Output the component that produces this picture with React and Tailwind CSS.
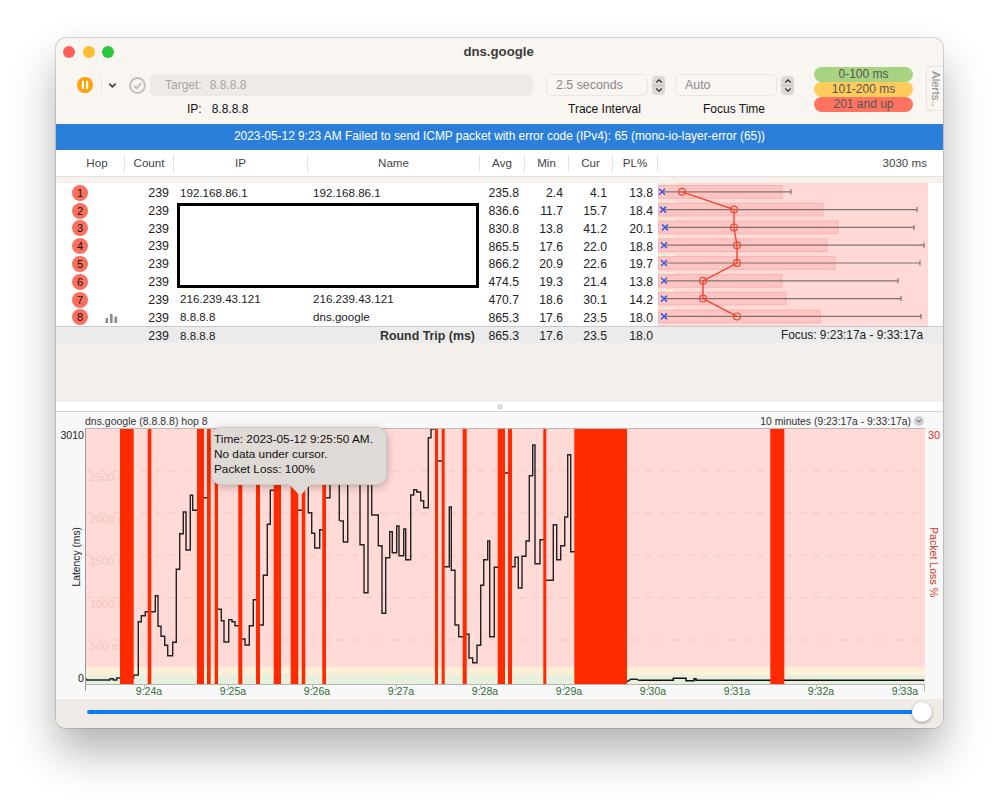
import React from 'react';
import { ChevronDown, ChevronUp } from 'lucide-react';

const hops = [
    { n: 1, ip: '192.168.86.1', name: '192.168.86.1', avg: '235.8', min: '2.4', cur: '4.1', pl: '13.8', bar: 124, end: 133, x: 4, c: 24 },
    { n: 2, ip: '', name: '', avg: '836.6', min: '11.7', cur: '15.7', pl: '18.4', bar: 165, end: 259, x: 5, c: 76 },
    { n: 3, ip: '', name: '', avg: '830.8', min: '13.8', cur: '41.2', pl: '20.1', bar: 180, end: 256, x: 7, c: 76 },
    { n: 4, ip: '', name: '', avg: '865.5', min: '17.6', cur: '22.0', pl: '18.8', bar: 169, end: 266, x: 6, c: 79 },
    { n: 5, ip: '', name: '', avg: '866.2', min: '20.9', cur: '22.6', pl: '19.7', bar: 177, end: 262, x: 6, c: 79 },
    { n: 6, ip: '', name: '', avg: '474.5', min: '19.3', cur: '21.4', pl: '13.8', bar: 124, end: 240, x: 6, c: 45 },
    { n: 7, ip: '216.239.43.121', name: '216.239.43.121', avg: '470.7', min: '18.6', cur: '30.1', pl: '14.2', bar: 128, end: 243, x: 6, c: 45 },
    { n: 8, ip: '8.8.8.8', name: 'dns.google', avg: '865.3', min: '17.6', cur: '23.5', pl: '18.0', bar: 162, end: 263, x: 6, c: 79 },
];

const columns = [
    { label: 'Hop', w: 'w-[69px] pl-[14px]' },
    { label: 'Count', w: 'w-[49px]' },
    { label: 'IP', w: 'w-[134px]' },
    { label: 'Name', w: 'w-[172px]' },
    { label: 'Avg', w: 'w-[45px]' },
    { label: 'Min', w: 'w-[44px]' },
    { label: 'Cur', w: 'w-[44px]' },
    { label: 'PL%', w: 'w-[45px]' },
];

// loss bars, page x from / to
const lossBars = [
    [120, 133.7], [147.7, 151.3], [197, 204], [207, 210.7], [214.7, 218], [238.3, 242.3], [256, 260],
    [273.7, 281], [290.7, 298.3], [301.7, 305.3], [322.3, 326], [435, 438], [441.7, 444.7], [462.7, 466.7],
    [497.7, 505], [508, 512], [543.3, 546.3], [574.3, 627], [770.3, 784.3],
];

// latency trace, read off the chart in 3x coordinates
const traceA = [
    77, 790, 80, 795, 150, 795, 150, 791, 160, 791, 160, 795, 170, 795, 170, 789, 221, 789, 221, 780, 235, 780, 235, 620,
    244, 620, 244, 602, 256, 602, 256, 590, 286, 590, 286, 542, 294, 542, 294, 634, 303, 634, 303, 664, 314, 664, 314, 691,
    323, 691, 323, 722, 338, 722, 338, 682, 349, 682, 349, 463, 359, 463, 359, 356, 370, 356, 370, 291, 378, 291, 378, 405,
    391, 405, 391, 241, 398, 241, 398, 286, 420, 286, 420, 248, 445, 248, 445, 100, 468, 100, 468, 583, 484, 583, 484, 617,
    492, 617, 492, 681, 506, 681, 506, 614, 516, 614, 516, 620, 525, 620, 525, 632, 540, 632, 540, 672, 555, 672, 555, 690,
    568, 690, 568, 632, 580, 632, 580, 554, 594, 554, 594, 630, 610, 630, 610, 481, 622, 481, 622, 328, 631, 328, 631, 226,
    650, 226, 650, 100, 700, 100, 700, 286, 730, 286, 730, 100, 745, 100, 745, 293, 755, 293, 755, 355, 764, 355, 764, 399,
    779, 399, 779, 344, 792, 344, 792, 248, 810, 248, 810, 100, 838, 100, 838, 318,
];
const traceB = [
    0, 318, 10, 318, 10, 381, 23, 381, 23, 100, 60, 100, 60, 389, 72, 389, 72, 533, 84, 533, 84, 100, 95, 100, 95, 300, 115, 300,
    115, 392, 126, 392, 126, 595, 137, 595, 137, 428, 149, 428, 149, 350, 157, 350, 157, 413, 170, 413, 170, 333, 177, 333,
    177, 422, 191, 422, 191, 342, 197, 342, 197, 434, 212, 434, 212, 240, 221, 240, 221, 224, 230, 224, 230, 231, 242, 231,
    242, 257, 251, 257, 251, 278, 265, 278, 265, 68, 273, 68, 273, 42, 290, 42, 290, 138, 310, 138, 310, 455, 328, 455,
    328, 276, 334, 276, 334, 466, 345, 466, 345, 630, 356, 630, 356, 665, 374, 665, 374, 658, 387, 658, 387, 729, 398, 729,
    398, 743, 411, 743, 411, 691, 422, 691, 422, 511, 431, 511, 431, 434, 443, 434, 443, 378, 449, 378, 449, 665, 463, 665,
    463, 457, 485, 457, 485, 174, 510, 174, 510, 455, 525, 455, 525, 427, 535, 427, 535, 519, 546, 519, 546, 424, 558, 424,
    558, 378, 568, 378, 568, 182, 578, 182, 578, 90, 585, 90, 585, 446, 600, 446, 600, 374, 614, 374, 614, 496, 640, 496,
    640, 329, 650, 329, 650, 434, 662, 434, 662, 392, 674, 392, 674, 306, 683, 306, 683, 119, 692, 119, 692, 410, 750, 410,
    750, 800, 861, 800, 872, 793, 890, 793, 900, 797,
];
const traceC = [0, 826, 100, 826, 100, 820, 138, 820, 138, 827, 162, 827, 162, 821, 168, 821, 168, 826, 853, 826];

const toPoints = (list, ox, oy) => {
    const out = [];
    for (let i = 0; i < list.length; i += 2) {
        out.push(`${(list[i] / 3 + ox - 85).toFixed(1)},${(list[i + 1] / 3 + oy - 428).toFixed(1)}`);
    }
    return out.join(' ');
};

const gridLines = [
    { y: 42.7, label: '2500 ms' },
    { y: 85, label: '2000 ms' },
    { y: 127.3, label: '1500 ms' },
    { y: 169.7, label: '1000 ms' },
    { y: 212, label: '500 ms' },
];

const timeLabels = ['9:24a', '9:25a', '9:26a', '9:27a', '9:28a', '9:29a', '9:30a', '9:31a', '9:32a', '9:33a'];

const Stepper = () => (
    <div className="w-[13px] h-[19px] ml-[1px] rounded-[4px] bg-[#dcd8d3] flex flex-col items-center justify-center text-[#333]">
        <ChevronUp size={10} strokeWidth={2.6} className="-mb-[1px]" />
        <div className="w-full h-px bg-[#c4c0bb]" />
        <ChevronDown size={10} strokeWidth={2.6} className="-mt-[1px]" />
    </div>
);

const HopPlot = () => {
    const rowH = 17.8;
    const cy = (i) => 8.8 + i * rowH;
    const line = hops.map((h, i) => `${h.c},${cy(i)}`).join(' ');
    return (
        <svg width="270" height="143" className="block shrink-0">
            <rect x="0" y="0" width="270" height="143" fill="#ffd9d5" />
            {hops.map((h, i) => (
                <g key={h.n}>
                    <rect x="0" y={cy(i) - 8.8} width="9" height="3" fill="#e4efdc" />
                    <rect x="9" y={cy(i) - 8.8} width="8" height="3" fill="#fdf0d8" />
                    <rect x="0.5" y={cy(i) - 6.3} width={h.bar - 0.5} height="12.6" fill="#ffbdbb" fillOpacity="0.75" stroke="#f2b3b3" />
                    <line x1={h.x} x2={h.end} y1={cy(i)} y2={cy(i)} stroke="#7d7272" strokeWidth="1.2" />
                    <line x1={h.end} x2={h.end} y1={cy(i) - 2.5} y2={cy(i) + 2.5} stroke="#7d7272" strokeWidth="1.2" />
                    <path
                        d={`M${h.x - 3} ${cy(i) - 3}L${h.x + 3} ${cy(i) + 3}M${h.x + 3} ${cy(i) - 3}L${h.x - 3} ${cy(i) + 3}`}
                        stroke="#3b5be6"
                        strokeWidth="1.5"
                    />
                </g>
            ))}
            <polyline points={line} fill="none" stroke="#f5452f" strokeWidth="1.4" />
            {hops.map((h, i) => (
                <circle key={h.n} cx={h.c} cy={cy(i)} r="3.4" fill="none" stroke="#f5452f" strokeWidth="1.2" />
            ))}
        </svg>
    );
};

const LossChart = () => (
    <svg width="840" height="271" className="block overflow-visible">
        <rect x="0" y="0" width="840" height="239" fill="#ffdad6" />
        <rect x="0" y="239" width="840" height="8" fill="#fdf0d8" />
        <rect x="0" y="247" width="840" height="9" fill="#e6f0dc" />
        {gridLines.map((g) => (
            <g key={g.y}>
                <line x1="0" x2="840" y1={g.y} y2={g.y} stroke="#f4c6c1" strokeDasharray="7 7" />
                <text x="5" y={g.y + 10} fontSize="11" fill="#f3c5c0">
                    {g.label}
                </text>
            </g>
        ))}
        <polyline points={toPoints(traceA, 60, 415)} fill="none" stroke="#222" strokeWidth="1.4" />
        <polyline points={toPoints(traceB, 340, 415)} fill="none" stroke="#222" strokeWidth="1.4" />
        <polyline points={toPoints(traceC, 640, 405)} fill="none" stroke="#111" strokeWidth="1.5" />
        {lossBars.map(([from, to]) => (
            <rect key={from} x={from - 85} y="0" width={to - from} height="256" fill="#ff2a00" />
        ))}
        <line x1="0" x2="840" y1="0.5" y2="0.5" stroke="#bdb6b3" />
        <line x1="0" x2="840" y1="256.5" y2="256.5" stroke="#b5b5b5" />
        <line x1="0.5" x2="0.5" y1="0" y2="263" stroke="#9a9a9a" />
        <line x1="839.5" x2="839.5" y1="256" y2="264" stroke="#b5b5b5" />
        {timeLabels.map((t, i) => (
            <g key={t}>
                <line x1={59.5 + i * 84} x2={59.5 + i * 84} y1="256" y2="261" stroke="#b5b5b5" />
                <text x={64 + i * 84} y="267" fontSize="10.5" fill="#2f6f35" textAnchor="middle">
                    {t}
                </text>
            </g>
        ))}
    </svg>
);

const App = () => {
    return (
        <div className="h-[802px] w-[999px] bg-white pt-[38px] pl-[56px] overflow-hidden font-['Liberation_Sans',Arial,sans-serif] text-[11.6px] text-[#222]">
            <div className="relative w-[887px] h-[690px] rounded-[10px] overflow-hidden flex flex-col bg-[#f9f5f0] shadow-[0_0_0_1px_rgba(0,0,0,0.14),0_24px_44px_rgba(0,0,0,0.3)]">
                {/* title bar and toolbar */}
                <div className="h-[86px] shrink-0 flex flex-col">
                    <div className="h-[27px] flex items-center relative">
                        <div className="flex gap-[7.6px] pl-[7px]">
                            <span className="w-3 h-3 rounded-full bg-[#ff5f57]" />
                            <span className="w-3 h-3 rounded-full bg-[#febc2e]" />
                            <span className="w-3 h-3 rounded-full bg-[#28c840]" />
                        </div>
                        <span className="flex-1 text-center font-bold text-[13.2px] text-[#3c3c3c] pr-[60px]">dns.google</span>
                    </div>
                    <div className="flex flex-1">
                        <div className="flex flex-col w-[477px] pl-[21px]">
                            <div className="flex items-center h-[24px] mt-[8px]">
                                <svg width="16" height="16" viewBox="0 0 16 16" className="shrink-0">
                                    <circle cx="8" cy="8" r="8" fill="#ffa00a" />
                                    <rect x="4.8" y="3.8" width="2.2" height="8.4" rx="1" fill="#fff" />
                                    <rect x="9" y="3.8" width="2.2" height="8.4" rx="1" fill="#fff" />
                                </svg>
                                <div className="w-px h-[14px] bg-[#e8e3de] ml-[8px]" />
                                <ChevronDown size={11} strokeWidth={3.5} className="ml-[5px] text-[#444]" />
                                <svg width="17" height="17" viewBox="0 0 17 17" className="ml-[11px] shrink-0">
                                    <circle cx="8.5" cy="8.5" r="7.4" fill="none" stroke="#c4c0bc" strokeWidth="2" />
                                    <path d="M5 8.6l2.6 2.6 4.6-5.2" fill="none" stroke="#c4c0bc" strokeWidth="2" />
                                </svg>
                                <div className="ml-[4px] flex-1 h-[22px] rounded-[5px] bg-[#eeeae6] flex items-center pl-[15px] text-[#a9a6a3] text-[12px]">
                                    <span>Target:</span>
                                    <span className="ml-[8px]">8.8.8.8</span>
                                </div>
                            </div>
                            <div className="mt-[3px] pl-[110px] flex text-[12px] text-[#111]">
                                <span>IP:</span>
                                <span className="ml-[10px]">8.8.8.8</span>
                            </div>
                        </div>
                        <div className="flex flex-col w-[129px] ml-[13px]">
                            <div className="flex items-center mt-[8px] h-[24px] gap-[3px]">
                                <div className="w-[102px] h-[22px] rounded-[5px] border border-[#ebe6e1] flex items-center pl-[9px] text-[#8b8b8b] text-[12.4px]">
                                    2.5 seconds
                                </div>
                                <Stepper />
                            </div>
                            <span className="mt-[3px] text-[12px] text-[#111] pl-[22px]">Trace Interval</span>
                        </div>
                        <div className="flex flex-col w-[129px]">
                            <div className="flex items-center mt-[8px] h-[24px] gap-[3px]">
                                <div className="w-[102px] h-[22px] rounded-[5px] border border-[#ebe6e1] flex items-center pl-[9px] text-[#8b8b8b] text-[12.4px]">
                                    Auto
                                </div>
                                <Stepper />
                            </div>
                            <span className="mt-[3px] text-[12px] text-[#111] pl-[28px]">Focus Time</span>
                        </div>
                        <div className="ml-[10px] mt-[2px] w-[99px] flex flex-col h-[45px] text-[#555] text-[12px] leading-[15px] text-center">
                            <span className="rounded-full bg-[#a8d482]">0-100 ms</span>
                            <span className="rounded-full bg-[#ffcc5c]">101-200 ms</span>
                            <span className="rounded-full bg-[#ff7460]">201 and up</span>
                        </div>
                        <div className="ml-[13px] mt-[1px] w-[17px] h-[45px] rounded-l-[4px] border border-r-0 border-[#e8e3de] text-[#8a8a8a] text-[11.5px] flex items-center justify-center [writing-mode:vertical-rl]">
                            Alerts..
                        </div>
                    </div>
                </div>

                {/* error banner */}
                <div className="h-[26px] shrink-0 bg-[#2b7fd9] text-white text-[11.9px] flex items-center justify-center">
                    2023-05-12 9:23 AM Failed to send ICMP packet with error code (IPv4): 65 (mono-io-layer-error (65))
                </div>

                {/* table header */}
                <div className="h-[27px] shrink-0 bg-white flex items-center text-[#444] text-[11.6px] border-b border-[#e6e1dc]">
                    {columns.map((c) => (
                        <div key={c.label} className={`${c.w} h-[16px] flex items-center justify-center border-r border-[#e2e2e2] shrink-0`}>
                            {c.label}
                        </div>
                    ))}
                    <div className="flex-1 text-right pr-[16px]">3030 ms</div>
                </div>
                <div className="h-[6px] shrink-0 bg-[#f6f1ec]" />

                {/* hop rows */}
                <div className="relative flex shrink-0 bg-white h-[143px]">
                    <div className="w-[602px] shrink-0">
                        {hops.map((h) => (
                            <div key={h.n} className="h-[17.8px] grid grid-cols-[69px_49px_134px_172px_45px_44px_44px_45px] items-center">
                                <div className="relative flex items-center">
                                    <span className="ml-[16px] w-4 h-4 rounded-full bg-[#fb6f5e] text-[#111] text-[11px] leading-4 text-center">
                                        {h.n}
                                    </span>
                                    {h.n === 8 && (
                                        <svg width="13" height="9" viewBox="0 0 13 9" className="absolute left-[49px] top-[5px] text-[#8a8a8a]">
                                            <rect x="0.5" y="4" width="2.6" height="5" fill="currentColor" />
                                            <rect x="5" y="0" width="2.6" height="9" fill="currentColor" />
                                            <rect x="9.5" y="2.5" width="2.6" height="6.5" fill="currentColor" />
                                        </svg>
                                    )}
                                </div>
                                <span className="text-right pr-[5px] text-[12.4px] pt-px">239</span>
                                <span className="pl-[6px] -mt-px">{h.ip}</span>
                                <span className="pl-[5px] -mt-px">{h.name}</span>
                                <span className="text-right pr-[6px] text-[12.2px] pt-px">{h.avg}</span>
                                <span className="text-right pr-[6px] text-[12.2px] pt-px">{h.min}</span>
                                <span className="text-right pr-[6px] text-[12.2px] pt-px">{h.cur}</span>
                                <span className="text-right pr-[5px] text-[12.2px] pt-px">{h.pl}</span>
                            </div>
                        ))}
                    </div>
                    <HopPlot />
                    {/* blanked out hops */}
                    <div className="absolute left-[121px] top-[20px] w-[302px] h-[85px] bg-white border-[3px] border-black" />
                </div>

                {/* round trip row */}
                <div className="h-[17px] shrink-0 bg-[#ebebeb] border-t border-[#c9c9c9] grid grid-cols-[69px_49px_134px_172px_45px_44px_44px_45px_1fr] items-center">
                    <span />
                    <span className="text-right pr-[5px] text-[12.4px]">239</span>
                    <span className="pl-[6px] -mt-px">8.8.8.8</span>
                    <span className="text-right pr-[5px] font-bold text-[12.4px] text-[#333] whitespace-nowrap">Round Trip (ms)</span>
                    <span className="text-right pr-[6px] text-[12.2px]">865.3</span>
                    <span className="text-right pr-[6px] text-[12.2px]">17.6</span>
                    <span className="text-right pr-[6px] text-[12.2px]">23.5</span>
                    <span className="text-right pr-[5px] text-[12.2px]">18.0</span>
                    <span className="text-right pr-[20px] text-[11.9px]">Focus: 9:23:17a - 9:33:17a</span>
                </div>
                <div className="h-[59px] shrink-0 bg-[#f5f0eb]" />

                {/* split handle */}
                <div className="h-[10px] shrink-0 bg-white border-b border-[#d4d4d4] flex items-center justify-center">
                    <span className="w-[6px] h-[6px] rounded-full bg-[#dedede]" />
                </div>

                {/* graph */}
                <div className="flex-1 bg-[#f8f8f8] flex flex-col">
                    <div className="relative h-[16px] shrink-0 flex items-center text-[10.5px] text-[#333] pl-[29px] pr-[18px] pt-[3px]">
                        <span>dns.google (8.8.8.8) hop 8</span>
                        <span className="ml-auto pr-[14px] text-[10.4px]">10 minutes (9:23:17a - 9:33:17a)</span>
                        <span className="absolute right-[19px] top-[4px] w-[10px] h-[10px] rounded-full bg-[#cfcfcf] flex items-center justify-center text-[#555]">
                            <ChevronDown size={8} strokeWidth={3} />
                        </span>
                    </div>
                    <div className="flex h-[271px] shrink-0">
                        <div className="w-[29px] h-[256px] shrink-0 flex flex-col justify-between items-end pr-px text-[10.6px] leading-[14px]">
                            <span>3010</span>
                            <span className="[writing-mode:vertical-rl] rotate-180 text-[10.3px]">Latency (ms)</span>
                            <span className="mb-[-1px]">0</span>
                        </div>
                        <div className="relative w-[840px] shrink-0">
                            <LossChart />
                            <div className="absolute left-[126px] -top-px w-[176px] h-[58px] rounded-[10px] bg-[#dfdad6] border border-[#cfc9c5] shadow-[0_2px_8px_rgba(0,0,0,0.25)] pl-[2px] pt-[4px] text-[11.8px] leading-[15px] text-[#111]">
                                <div>Time: 2023-05-12 9:25:50 AM.</div>
                                <div>No data under cursor.</div>
                                <div>Packet Loss: 100%</div>
                                <svg width="24" height="13" viewBox="0 0 24 13" className="absolute left-[76px] top-[56px]">
                                    <path d="M1 0L12 12L23 0Z" fill="#dfdad6" />
                                </svg>
                            </div>
                        </div>
                        <div className="w-[18px] h-[256px] shrink-0 flex flex-col items-center text-[#e0301e] text-[11px] leading-[14px]">
                            <span>30</span>
                            <span className="mt-[85px] text-[10.6px] [writing-mode:vertical-rl]">Packet Loss %</span>
                        </div>
                    </div>
                    <div className="flex-1 bg-[#f0ebe6] flex items-center pl-[31px] pr-[11px] pb-[3px]">
                        <div className="flex-1 h-[3.5px] rounded-full bg-[#0a7bff]" />
                        <span className="-ml-[1px] w-5 h-5 shrink-0 rounded-full bg-white shadow-[0_1px_3px_rgba(0,0,0,0.4)]" />
                    </div>
                </div>
            </div>
        </div>
    );
};

export default App;
